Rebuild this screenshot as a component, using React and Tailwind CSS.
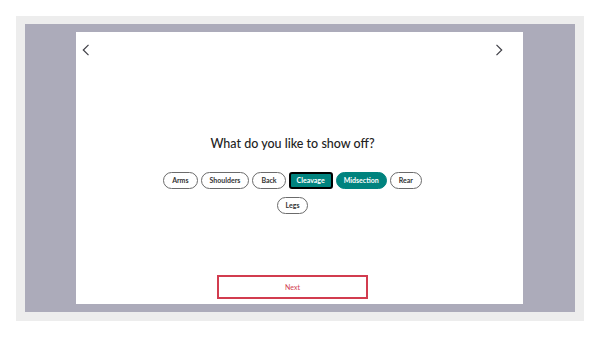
const options = [
  { label: "Arms", selected: false },
  { label: "Shoulders", selected: false },
  { label: "Back", selected: false },
  { label: "Cleavage", selected: true, focused: true },
  { label: "Midsection", selected: true },
  { label: "Rear", selected: false },
  { label: "Legs", selected: false },
];

const Chevron = ({ dir }) => (
  <svg width="8" height="12" viewBox="0 0 8 12" fill="none">
    <path
      d={dir === "left" ? "M6.5 0.8 L1.3 6 L6.5 11.2" : "M1.5 0.8 L6.7 6 L1.5 11.2"}
      stroke="#3f3f46"
      strokeWidth="1.2"
    />
  </svg>
);

const Pill = ({ item }) => {
  if (item.focused) {
    return (
      <button className="h-[17px] px-[6px] rounded-[3px] border-2 border-black bg-[#00837e] text-white text-[7px] font-bold leading-none">
        {item.label}
      </button>
    );
  }
  return (
    <button
      className={
        item.selected
          ? "h-[17px] px-[7px] rounded-full border border-[#00837e] bg-[#00837e] text-white text-[7px] font-bold leading-none"
          : "h-[17px] px-[8px] rounded-full border border-[#6b6b6b] bg-white text-[#333] text-[7px] font-bold leading-none"
      }
    >
      {item.label}
    </button>
  );
};

export default function App() {
  return (
    <div
      className="w-[600px] h-[337px] bg-white pt-[16px] pl-[16px]"
      style={{ fontFamily: "Lato, 'Open Sans', sans-serif" }}
    >
      <div className="w-[568px] h-[305px] bg-[#ededed] pt-[8px] pl-[9px]">
        <div className="w-[550px] h-[288px] bg-[#acabba] pt-[8px] pl-[51px]">
          <div className="w-[447px] h-[272px] bg-white pr-[14px] flex flex-col">
            <div className="flex justify-between pt-[12px] pl-[6px] pr-[6px]">
              <Chevron dir="left" />
              <Chevron dir="right" />
            </div>

            <h2 className="mt-[80px] text-center text-[12.5px] leading-[16px] text-[#222] font-medium">
              What do you like to show off?
            </h2>

            <div className="mt-[20px] flex flex-wrap justify-center gap-x-[3px] gap-y-[8px] px-[80px]">
              {options.map((item) => (
                <Pill key={item.label} item={item} />
              ))}
            </div>

            <div className="mt-auto mb-[5px] flex justify-center">
              <button className="w-[151px] h-[24px] border-2 border-[#d23c4f] text-[#d23c4f] text-[7px] leading-none">
                Next
              </button>
            </div>
          </div>
        </div>
      </div>
    </div>
  );
}
